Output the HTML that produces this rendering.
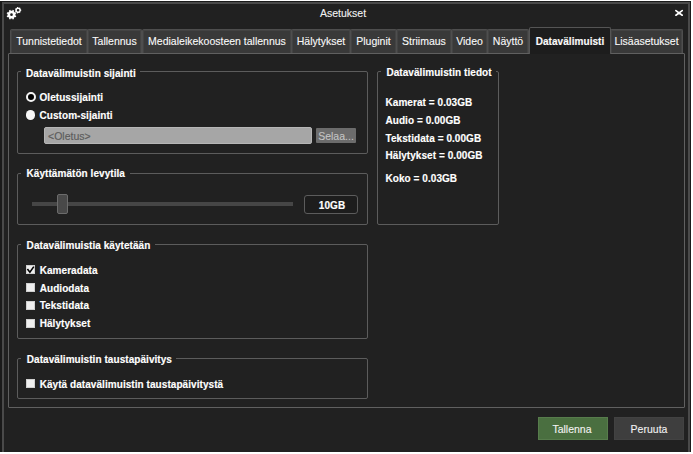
<!DOCTYPE html>
<html><head><meta charset="utf-8">
<style>
*{margin:0;padding:0;box-sizing:border-box}
html,body{width:693px;height:454px;overflow:hidden;background:#fff}
body{position:relative;font-family:"Liberation Sans",sans-serif;color:#f2f2f2}
.a{position:absolute}
.win{left:0;top:1px;width:691px;height:451px;background:#1a1a1a}
.frame{left:2px;top:2px;width:688px;height:450px;background:#212121;border-left:2px solid #4a4a4a;border-top:2px solid #4a4a4a;border-right:2px solid #4a4a4a}
.t{position:absolute;white-space:nowrap;line-height:12px;font-size:10.5px;-webkit-text-stroke:0.1px currentColor}
.b{font-weight:bold;font-size:10px;color:#fff;-webkit-text-stroke:0.15px #fff;letter-spacing:0.06px}
.tab{position:absolute;top:29px;height:25px;background:#393939;border:1px solid #4e4e4e;border-bottom:none;border-radius:2px 2px 0 0;box-shadow:inset 1px 1px 0 #434343,inset -1px 0 0 #434343}
.tab .t{left:0;right:0;text-align:center;top:5px;color:#fafafa}
.panel{left:8px;top:53px;width:677px;height:355px;border:1px solid #606060;border-radius:1px;background:#212121}
.grp{position:absolute;border:1px solid #5c5c5c;border-radius:2px}
.gt{position:absolute;background:#212121;padding:0 2px}
.cb{position:absolute;width:9px;height:9px;background:#efefef;border:1px solid #d0d0d0}
</style></head><body>
<div class="a win"></div>
<div class="a frame"></div>

<!-- title bar -->
<svg class="a" style="left:4px;top:4px" width="20" height="20" viewBox="0 0 20 20">
  <g fill="#fff" fill-rule="evenodd">
    <path d="M11.42 11.48 L12.35 11.91 L11.79 13.27 L10.83 12.92 L9.72 14.03 L10.07 14.99 L8.71 15.55 L8.28 14.62 L6.72 14.62 L6.29 15.55 L4.93 14.99 L5.28 14.03 L4.17 12.92 L3.21 13.27 L2.65 11.91 L3.58 11.48 L3.58 9.92 L2.65 9.49 L3.21 8.13 L4.17 8.48 L5.28 7.37 L4.93 6.41 L6.29 5.85 L6.72 6.78 L8.28 6.78 L8.71 5.85 L10.07 6.41 L9.72 7.37 L10.83 8.48 L11.79 8.13 L12.35 9.49 L11.42 9.92 Z M6.15 10.70 a1.35 1.35 0 1 0 2.70 0 a1.35 1.35 0 1 0 -2.70 0 Z"/>
    <path d="M16.83 5.58 L17.25 5.66 L17.25 6.74 L16.83 6.82 L16.29 7.95 L16.49 8.33 L15.65 9.00 L15.31 8.72 L14.10 9.00 L13.92 9.39 L12.88 9.16 L12.89 8.72 L11.91 7.95 L11.49 8.05 L11.03 7.09 L11.37 6.82 L11.37 5.58 L11.03 5.31 L11.49 4.35 L11.91 4.45 L12.89 3.68 L12.88 3.24 L13.92 3.01 L14.10 3.40 L15.31 3.68 L15.65 3.40 L16.49 4.07 L16.29 4.45 Z M12.80 6.20 a1.3 1.3 0 1 0 2.60 0 a1.3 1.3 0 1 0 -2.60 0 Z"/>
  </g>
</svg>
<div class="t" style="left:0;width:686px;text-align:center;top:7px">Asetukset</div>
<svg class="a" style="left:674px;top:9px" width="10" height="9" viewBox="0 0 10 9">
  <path d="M1.9 1.6 L8.2 6.2 M8.2 1.6 L1.9 6.2" stroke="#fff" stroke-width="1.7" stroke-linecap="round"/>
</svg>

<!-- tabs -->
<div class="tab" style="left:10px;width:78px"><div class="t">Tunnistetiedot</div></div>
<div class="tab" style="left:87px;width:55px"><div class="t">Tallennus</div></div>
<div class="tab" style="left:142px;width:150px"><div class="t">Medialeikekoosteen tallennus</div></div>
<div class="tab" style="left:291px;width:60px"><div class="t">Hälytykset</div></div>
<div class="tab" style="left:350px;width:47px"><div class="t">Pluginit</div></div>
<div class="tab" style="left:396px;width:56px"><div class="t">Striimaus</div></div>
<div class="tab" style="left:451px;width:37px"><div class="t">Video</div></div>
<div class="tab" style="left:487px;width:42px"><div class="t">Näyttö</div></div>
<div class="tab" style="left:610px;width:73px"><div class="t">Lisäasetukset</div></div>

<div class="a panel"></div>
<div class="tab" style="left:529px;width:82px;top:27px;height:27px;background:#1d1d1d;border-color:#555;box-shadow:none"><div class="t b" style="top:8px">Datavälimuisti</div></div>


<!-- group 1 -->
<div class="grp" style="left:17px;top:71px;width:351px;height:83px"></div>
<div class="gt" style="left:21px;top:66px;width:119px;height:12px"></div>
<div class="t b" style="left:26px;top:68px">Datavälimuistin sijainti</div>
<div class="a" style="left:25.5px;top:92px;width:10px;height:10px;border-radius:50%;border:2px solid #f4f4f4;background:#000"></div>
<div class="t b" style="left:39.5px;top:92px">Oletussijainti</div>
<div class="a" style="left:25.7px;top:110.3px;width:9.6px;height:9.6px;border-radius:50%;background:#f6f6f6"></div>
<div class="t b" style="left:39.5px;top:109.6px">Custom-sijainti</div>
<div class="a" style="left:44px;top:127px;width:268px;height:17px;background:#a6a6a6;border:1px solid #b6b6b6;border-radius:2px"></div>
<div class="t" style="left:48px;top:130px;color:#5c5c5c;-webkit-text-stroke:0.15px #5c5c5c">&lt;Oletus&gt;</div>
<div class="a" style="left:316px;top:128px;width:40px;height:15px;background:#6c6c6c;border-radius:1px"></div>
<div class="t" style="left:316px;width:40px;text-align:center;top:130px;color:#c4c4c4">Selaa...</div>

<!-- group 2 -->
<div class="grp" style="left:17px;top:173px;width:351px;height:52px"></div>
<div class="gt" style="left:21px;top:167px;width:109px;height:12px"></div>
<div class="t b" style="left:26.5px;top:168px">Käyttämätön levytila</div>
<div class="a" style="left:32px;top:202px;width:261px;height:4px;background:#464646"></div>
<div class="a" style="left:57px;top:194px;width:11px;height:20px;background:#494949;border:1px solid #6c6c6c;border-radius:2px"></div>
<div class="a" style="left:304px;top:195px;width:54px;height:19px;border:1px solid #5c5c5c;border-radius:3px;background:#1d1d1d"></div>
<div class="t b" style="left:305px;width:54px;text-align:center;top:199.5px">10GB</div>

<!-- group 3 -->
<div class="grp" style="left:17px;top:244px;width:351px;height:95px"></div>
<div class="gt" style="left:21px;top:238px;width:134px;height:12px"></div>
<div class="t b" style="left:26.6px;top:240px">Datavälimuistia käytetään</div>
<div class="cb" style="left:26px;top:265px"></div>
<svg class="a" style="left:26px;top:265px" width="9" height="9" viewBox="0 0 9 9"><path d="M1.4 4 L3.9 7.2 L7.8 1.6" fill="none" stroke="#000" stroke-width="1.6"/></svg>
<div class="t b" style="left:39.7px;top:265px">Kameradata</div>
<div class="cb" style="left:26px;top:283px"></div>
<div class="t b" style="left:39.7px;top:283px">Audiodata</div>
<div class="cb" style="left:26px;top:301px"></div>
<div class="t b" style="left:39.7px;top:300px">Tekstidata</div>
<div class="cb" style="left:26px;top:319px"></div>
<div class="t b" style="left:39.7px;top:318px">Hälytykset</div>

<!-- group 4 -->
<div class="grp" style="left:17px;top:358px;width:351px;height:41px"></div>
<div class="gt" style="left:21px;top:353px;width:155px;height:12px"></div>
<div class="t b" style="left:26.8px;top:354px">Datavälimuistin taustapäivitys</div>
<div class="cb" style="left:26px;top:379px"></div>
<div class="t b" style="left:39.7px;top:379px">Käytä datavälimuistin taustapäivitystä</div>

<!-- right group -->
<div class="grp" style="left:377px;top:71px;width:122px;height:154px"></div>
<div class="gt" style="left:381px;top:66px;width:115px;height:12px"></div>
<div class="t b" style="left:386.4px;top:67px">Datavälimuistin tiedot</div>
<div class="t b" style="left:385.5px;top:97px">Kamerat = 0.03GB</div>
<div class="t b" style="left:385.5px;top:115px">Audio = 0.00GB</div>
<div class="t b" style="left:385.5px;top:132.5px">Tekstidata = 0.00GB</div>
<div class="t b" style="left:385.5px;top:150px">Hälytykset = 0.00GB</div>
<div class="t b" style="left:385.5px;top:173px">Koko = 0.03GB</div>

<!-- buttons -->
<div class="a" style="left:538px;top:417px;width:70px;height:23px;background:#4a6f40;border:1px solid #577c4c"></div>
<div class="t" style="left:537px;width:70px;text-align:center;top:423px">Tallenna</div>
<div class="a" style="left:614px;top:417px;width:70px;height:23px;background:#3e3e3e;border:1px solid #424242"></div>
<div class="t" style="left:614px;width:70px;text-align:center;top:423px">Peruuta</div>
</body></html>
